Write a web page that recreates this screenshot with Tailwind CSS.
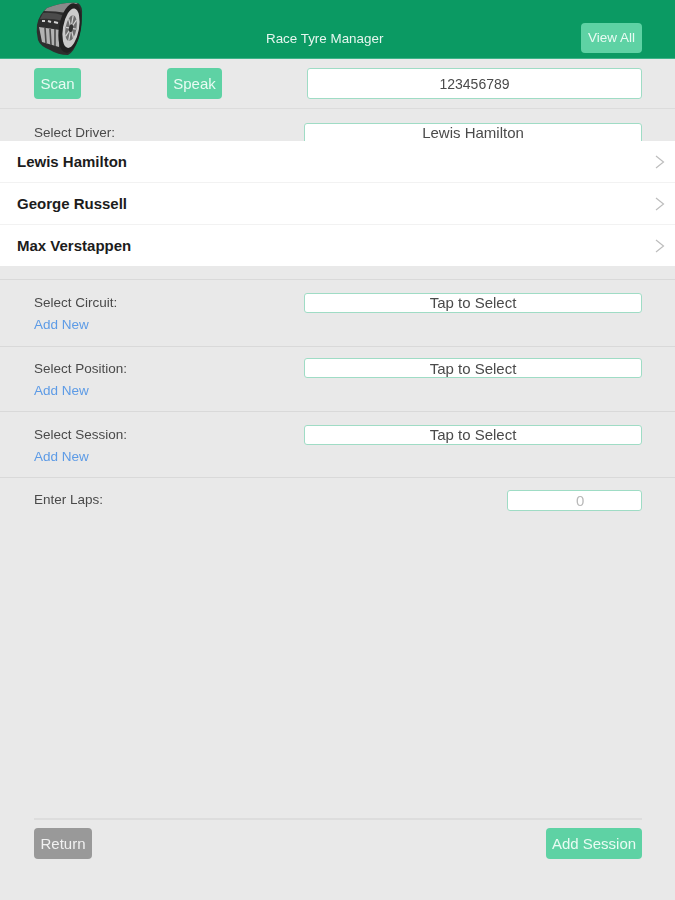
<!DOCTYPE html>
<html lang="en">
<head>
    <meta charset="UTF-8">
    <meta name="viewport" content="width=device-width, initial-scale=1.0">
    <title>Race Tyre Manager</title>
    <script src="https://cdn.jsdelivr.net/npm/@tailwindcss/browser@4"></script>
</head>
<body class="bg-[#e9e9e9] font-['Liberation_Sans',Arial,sans-serif] text-[#4a4a4a]">
    <div class="w-[675px] h-[900px] flex flex-col overflow-hidden blur-[0.5px]">
        <!-- Header -->
        <header class="h-[59px] shrink-0 bg-[#0b9a63] border-b border-[#3fb389] pl-[36px] pr-[33px] flex items-start">
            <svg class="mt-[2px] w-[48px] h-[54px]" viewBox="0 0 48 54">
                <path d="M11 6 Q26 0 42 1 Q47 4 46 14 Q45 30 42 38 Q38 50 32 53 Q22 53 14 48 Q4 44 2 38 Q0 30 1 23 Q3 12 11 6Z" fill="#2e2e2e"/>
                <path d="M11 6 Q26 0 42 1 Q36 4 31 11 Q20 9 8 9Z" fill="#8a8a8a"/>
                <path d="M7 11 Q18 10 29 14 L27 19 Q15 16 4 17Z" fill="#4b4b4b"/>
                <path d="M6 19 H9 M12 19 L15 20 M18 20 L22 21" stroke="#d0d0d0" stroke-width="2"/>
                <path d="M3 25 L24 28 L23 45 L6 40Z" fill="#b3b3b3"/>
                <path d="M9 26 L10 41 M14 27 L15 43 M19 27 L19 44" stroke="#4a4a4a" stroke-width="1.6"/>
                <g transform="rotate(10 34 26)">
                    <ellipse cx="34" cy="26" rx="11" ry="25" fill="#222222"/>
                    <ellipse cx="35" cy="26" rx="8" ry="20" fill="#cbcbcb"/>
                    <ellipse cx="35" cy="26" rx="5.5" ry="13" fill="#6e6e6e"/>
                    <path d="M35 13 V39 M30 26 H40 M31 17 L39 35 M39 17 L31 35" stroke="#d2d2d2" stroke-width="1.2"/>
                    <ellipse cx="35" cy="26" rx="2" ry="4" fill="#333333"/>
                </g>
            </svg>
            <h1 class="ml-[182px] mt-[31px] w-[117px] whitespace-nowrap text-center text-[13.4px] leading-[15px] font-normal text-[#e6f6ef]">Race Tyre Manager</h1>
            <button class="ml-auto mt-[23px] w-[61px] h-[30px] rounded-[4px] bg-[#5ed2a4] text-[13.5px] text-[#e9fbf3]">View All</button>
        </header>

        <!-- Scan row -->
        <div class="h-[50px] shrink-0 border-b border-[#dcdcdc] pl-[34px] pr-[33px] pt-[9px] flex items-start">
            <button class="w-[47px] h-[31px] pt-[1px] rounded-[4px] bg-[#5ed2a4] text-[15px] text-[#e9fbf3]">Scan</button>
            <button class="ml-[86px] w-[55px] h-[31px] pt-[1px] rounded-[4px] bg-[#5ed2a4] text-[15px] text-[#e9fbf3]">Speak</button>
            <div class="ml-auto w-[335px] h-[31px] pt-[1px] rounded-[3px] bg-white border border-[#9fdcc5] flex items-center justify-center text-[14px]">123456789</div>
        </div>

        <!-- Driver select with open list -->
        <div class="h-[32px] shrink-0 pl-[34px] pr-[33px] pt-[14px] flex items-start overflow-hidden">
            <span class="pt-[1px] text-[13.5px] leading-[18px]">Select Driver:</span>
            <div class="ml-auto w-[338px] h-[22px] rounded-[3px] bg-white border border-[#9fdcc5] text-center text-[15px] leading-[17px]">Lewis Hamilton</div>
        </div>
        <ul class="h-[125px] shrink-0 bg-white divide-y divide-[#f2f2f2] font-bold text-[15px] text-[#1c1c1c]">
            <li class="h-[42px] pl-[17px] pr-[10px] flex items-center justify-between">
                <span class="pt-[2px]">Lewis Hamilton</span>
                <svg class="w-[10px] h-[14px]" viewBox="0 0 10 14" fill="none" stroke="#bdbdbd" stroke-width="1.2"><path d="M1 1 L8.5 7 L1 13"/></svg>
            </li>
            <li class="h-[42px] pl-[17px] pr-[10px] flex items-center justify-between">
                <span class="pt-[2px]">George Russell</span>
                <svg class="w-[10px] h-[14px]" viewBox="0 0 10 14" fill="none" stroke="#bdbdbd" stroke-width="1.2"><path d="M1 1 L8.5 7 L1 13"/></svg>
            </li>
            <li class="h-[41px] pl-[17px] pr-[10px] flex items-center justify-between">
                <span class="pt-[2px]">Max Verstappen</span>
                <svg class="w-[10px] h-[14px]" viewBox="0 0 10 14" fill="none" stroke="#bdbdbd" stroke-width="1.2"><path d="M1 1 L8.5 7 L1 13"/></svg>
            </li>
        </ul>
        <div class="h-[14px] shrink-0 border-b border-[#d9d9d9]"></div>

        <!-- Selects -->
        <section class="h-[67px] shrink-0 border-b border-[#d9d9d9] pl-[34px] pr-[33px] pt-[13px] flex items-start">
            <div class="pt-[1px]">
                <div class="text-[13.5px] leading-[18px]">Select Circuit:</div>
                <a class="block mt-[4px] text-[13.5px] leading-[18px] text-[#5d9be6]">Add New</a>
            </div>
            <div class="ml-auto w-[338px] h-[20px] rounded-[3px] bg-white border border-[#9fdcc5] text-center text-[15px] leading-[18px]">Tap to Select</div>
        </section>
        <section class="h-[65px] shrink-0 border-b border-[#d9d9d9] pl-[34px] pr-[33px] pt-[11px] flex items-start">
            <div class="pt-[2px]">
                <div class="text-[13.5px] leading-[18px]">Select Position:</div>
                <a class="block mt-[4px] text-[13.5px] leading-[18px] text-[#5d9be6]">Add New</a>
            </div>
            <div class="ml-auto w-[338px] h-[20px] rounded-[3px] bg-white border border-[#9fdcc5] text-center text-[15px] leading-[20px]">Tap to Select</div>
        </section>
        <section class="h-[66px] shrink-0 border-b border-[#d9d9d9] pl-[34px] pr-[33px] pt-[13px] flex items-start">
            <div class="pt-[1px]">
                <div class="text-[13.5px] leading-[18px]">Select Session:</div>
                <a class="block mt-[4px] text-[13.5px] leading-[18px] text-[#5d9be6]">Add New</a>
            </div>
            <div class="ml-auto w-[338px] h-[20px] rounded-[3px] bg-white border border-[#9fdcc5] text-center text-[15px] leading-[18px]">Tap to Select</div>
        </section>
        <section class="pl-[34px] pr-[33px] pt-[12px] flex items-start">
            <div class="pt-[1px] text-[13.5px] leading-[18px]">Enter Laps:</div>
            <div class="ml-auto w-[135px] h-[21px] rounded-[3px] bg-white border border-[#9fdcc5] pl-[68px] text-[15px] leading-[19px] text-[#b9b9b9]">0</div>
        </section>

        <!-- Footer -->
        <footer class="mt-auto mb-[41px] ml-[34px] mr-[33px] border-t-2 border-[#dddddd] pt-[8px] flex justify-between">
            <button class="w-[58px] h-[31px] pt-[1px] rounded-[4px] bg-[#999999] text-[15px] text-[#f1f1f1]">Return</button>
            <button class="w-[96px] h-[31px] pt-[1px] rounded-[4px] bg-[#5ed2a4] text-[15px] text-[#e9fbf3]">Add Session</button>
        </footer>
    </div>
</body>
</html>
